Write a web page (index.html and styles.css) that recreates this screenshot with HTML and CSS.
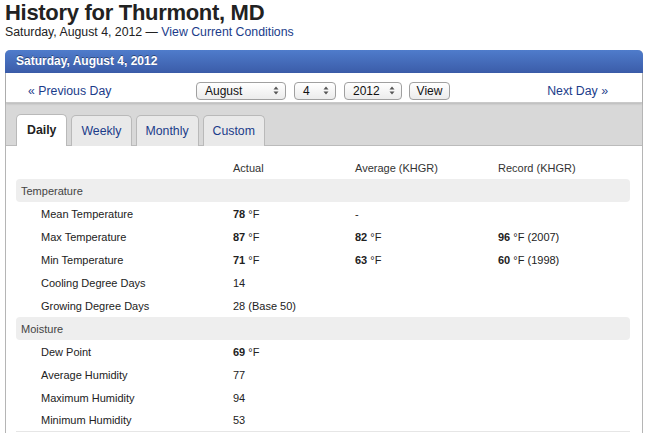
FILE: index.html
```html
<!DOCTYPE html>
<html>
<head>
<meta charset="utf-8">
<link rel="stylesheet" href="styles.css">
</head>
<body>
<h1 class="title">History for Thurmont, MD</h1>
<div class="subtitle">Saturday, August 4, 2012 — <a class="link" href="#">View Current Conditions</a></div>

<div class="panel">
  <div class="panel-head">Saturday, August 4, 2012</div>
  <div class="nav">
    <a class="nav-link prev" href="#">« Previous Day</a>
    <div class="picker">
      <span class="sel sel-month">August<svg class="arr" width="6" height="9" viewBox="0 0 6 9"><path d="M0.5 3.5 L3 0.5 L5.5 3.5 Z M0.5 5.5 L3 8.5 L5.5 5.5 Z" fill="#555"/></svg></span>
      <span class="sel sel-day">4<svg class="arr" width="6" height="9" viewBox="0 0 6 9"><path d="M0.5 3.5 L3 0.5 L5.5 3.5 Z M0.5 5.5 L3 8.5 L5.5 5.5 Z" fill="#555"/></svg></span>
      <span class="sel sel-year">2012<svg class="arr" width="6" height="9" viewBox="0 0 6 9"><path d="M0.5 3.5 L3 0.5 L5.5 3.5 Z M0.5 5.5 L3 8.5 L5.5 5.5 Z" fill="#555"/></svg></span>
      <span class="btn">View</span>
    </div>
    <a class="nav-link next" href="#">Next Day »</a>
  </div>
  <div class="tabbar">
    <span class="tab active">Daily</span>
    <span class="tab">Weekly</span>
    <span class="tab">Monthly</span>
    <span class="tab">Custom</span>
  </div>
  <div class="content">
    <div class="table">
      <div class="row head"><span></span><span>Actual</span><span>Average (KHGR)</span><span>Record (KHGR)</span></div>
      <div class="row section"><span>Temperature</span></div>
      <div class="row"><span class="lbl">Mean Temperature</span><span><b>78</b> °F</span><span>-</span><span></span></div>
      <div class="row"><span class="lbl">Max Temperature</span><span><b>87</b> °F</span><span><b>82</b> °F</span><span><b>96</b> °F (2007)</span></div>
      <div class="row"><span class="lbl">Min Temperature</span><span><b>71</b> °F</span><span><b>63</b> °F</span><span><b>60</b> °F (1998)</span></div>
      <div class="row"><span class="lbl">Cooling Degree Days</span><span>14</span><span></span><span></span></div>
      <div class="row"><span class="lbl">Growing Degree Days</span><span>28 (Base 50)</span><span></span><span></span></div>
      <div class="row section"><span>Moisture</span></div>
      <div class="row"><span class="lbl">Dew Point</span><span><b>69</b> °F</span><span></span><span></span></div>
      <div class="row"><span class="lbl">Average Humidity</span><span>77</span><span></span><span></span></div>
      <div class="row"><span class="lbl">Maximum Humidity</span><span>94</span><span></span><span></span></div>
      <div class="row last"><span class="lbl">Minimum Humidity</span><span>53</span><span></span><span></span></div>
    </div>
  </div>
</div>
</body>
</html>
```

FILE: styles.css
```css
* { box-sizing: border-box; }
body {
  margin: 0 5px;
  font-family: "Liberation Sans", Arial, Helvetica, sans-serif;
  color: #222;
  background: #fff;
}
.title {
  margin: 0;
  font-size: 22px;
  line-height: 25px;
  font-weight: bold;
  color: #222;
  letter-spacing: -0.3px;
}
.subtitle {
  font-size: 12.3px;
  line-height: 14px;
  color: #222;
}
.link { color: #1b3c8a; text-decoration: none; }
.panel {
  margin-top: 11px;
  border-left: 1px solid #b5b5b5;
  border-right: 1px solid #b5b5b5;
  border-radius: 5px 5px 0 0;
  height: 400px;
}
.panel-head {
  height: 23px;
  margin: 0 -1px;
  border-radius: 5px 5px 0 0;
  background: linear-gradient(#4f7ccb, #3b5ca9);
  color: #fff;
  font-weight: bold;
  font-size: 12px;
  line-height: 23px;
  padding-left: 11px;
  text-shadow: 0 -1px 0 rgba(0,0,0,0.4);
}
.nav {
  height: 30px;
  display: flex;
  align-items: center;
  padding: 6px 34px 0 22px;
  font-size: 12.3px;
  border-bottom: 1px solid #c9c9c9;
  box-shadow: 0 1px 2px rgba(0,0,0,0.15);
  position: relative;
}
.nav-link { color: #1b3c8a; text-decoration: none; }
.prev { width: 168px; }
.picker { display: flex; gap: 8px; align-items: center; flex: 1; }
.sel, .btn {
  height: 18px;
  border: 1px solid #a0a0a0;
  border-radius: 4px;
  background: linear-gradient(#ffffff, #ececec);
  font-size: 12px;
  line-height: 16px;
  color: #111;
  display: flex;
  align-items: center;
  justify-content: space-between;
  padding: 0 6px 0 8px;
}
.sel-month { width: 90px; }
.sel-day { width: 42px; }
.sel-year { width: 58px; }
.btn { width: 41px; justify-content: center; padding: 0; margin-left: -1px; }
.arr { flex: none; }
.tabbar {
  height: 43px;
  background: #d8d8d8;
  border-bottom: 1px solid #bbb;
  display: flex;
  align-items: flex-end;
  gap: 4px;
  padding-left: 10px;
}
.tab {
  height: 31px;
  margin-bottom: -1px;
  border: 1px solid #b9b9b9;
  border-bottom: none;
  border-radius: 5px 5px 0 0;
  background: #e9e9e9;
  color: #1b3c8a;
  font-size: 12.3px;
  line-height: 30px;
  padding: 0 9px;
}
.tab.active {
  background: #fff;
  color: #222;
  font-weight: bold;
  height: 32px;
  padding: 0 10px;
}
.content { padding: 10px 12px 0 10px; }
.row {
  display: grid;
  grid-template-columns: 217px 122px 143px 1fr;
  height: 23px;
  align-items: center;
  font-size: 11px;
  color: #222;
}
.row b { font-weight: bold; }
.lbl { padding-left: 25px; }
.row.head { color: #333; }
.row.section {
  background: #eeeeee;
  border-radius: 4px;
  color: #444;
  padding-left: 5px;
  grid-template-columns: 1fr;
}
.row.last { border-bottom: 1px solid #e6e6e6; }
```
